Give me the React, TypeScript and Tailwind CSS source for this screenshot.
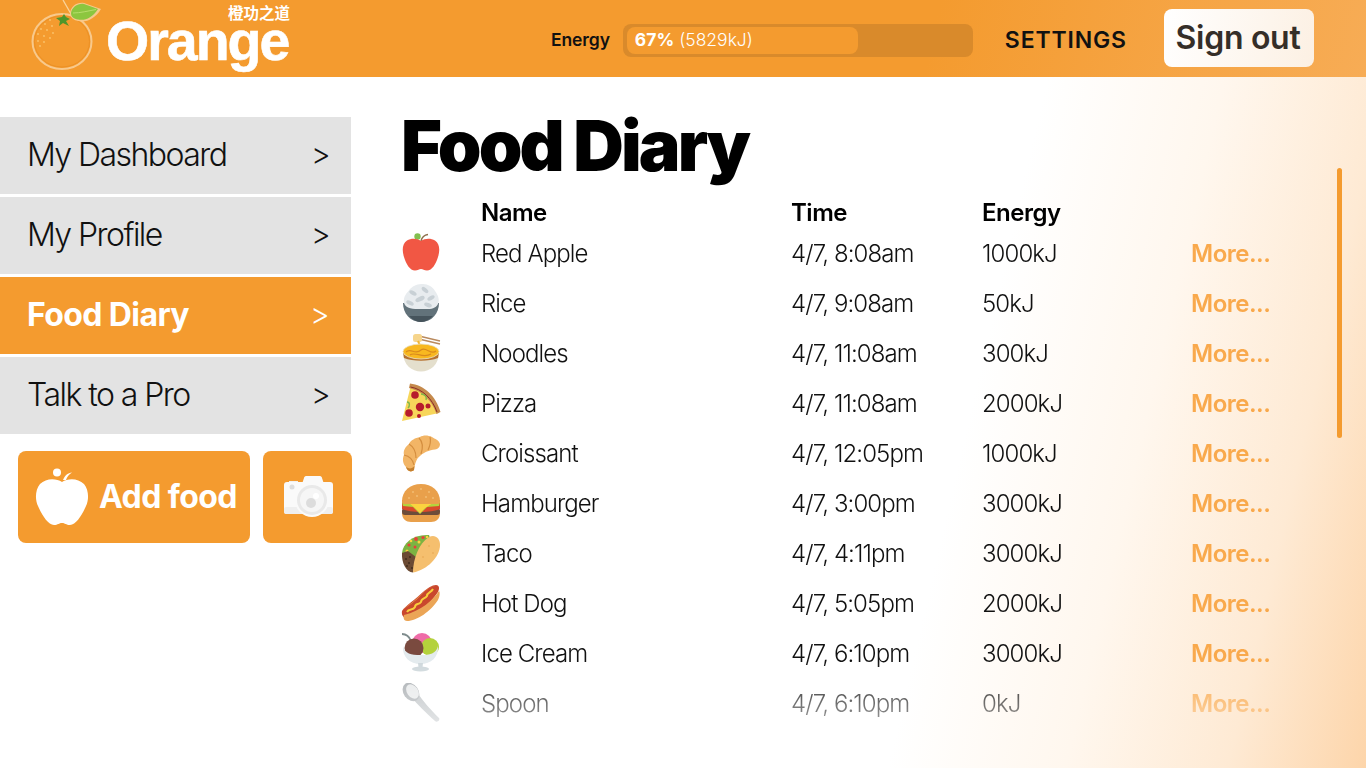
import React from "react";

const inter = { fontFamily: "Inter, 'Noto Sans', sans-serif" };

const Apple = () => (
  <svg viewBox="0 0 40 40" className="w-10 h-10">
    <path d="M20 8 C21 4 23 2 27 1.500" stroke="#8d6e4a" strokeWidth="1.500" fill="none" />
    <circle cx="16.500" cy="3.500" r="3.200" fill="#83BF4F" />
    <path d="M20 8 C24 5 30 5 34 7.500 C39 11 39 18 37 24 C35 31 31 37.500 26 37.500 C23 37.500 22 36 20 36 C18 36 17 37.500 14 37.500 C9 37.500 5 31 3 24 C1 18 1 11 6 7.500 C10 5 16 5 20 8Z" fill="#F15744" />
  </svg>
);
const Rice = () => (
  <svg viewBox="0 0 40 40" className="w-10 h-10">
    <path d="M2 20 C2 30 9 39 20 39 C31 39 38 30 38 20Z" fill="#62727A" />
    <path d="M8 33 C12 37 16 39 20 39 C24 39 28 37 32 33Z" fill="#46545C" />
    <path d="M3 20 C2 13 6 10 9 6 C13 2 17 1 22 1 C27 1 32 4 34 8 C37 12 39 17 37 21 C34 27 27 26 20 26 C12 26 5 26 3 20Z" fill="#E8ECEF" />
    <g fill="#C8D0D5">
      <ellipse cx="12" cy="10" rx="4" ry="2" transform="rotate(30 12 10)" />
      <ellipse cx="24" cy="7" rx="4" ry="2" transform="rotate(40 24 7)" />
      <ellipse cx="30" cy="15" rx="4" ry="2" transform="rotate(-30 30 15)" />
      <ellipse cx="19" cy="16" rx="5" ry="2.300" transform="rotate(-25 19 16)" />
      <ellipse cx="9" cy="20" rx="4" ry="2" transform="rotate(25 9 20)" />
      <ellipse cx="27" cy="22" rx="4" ry="2" transform="rotate(20 27 22)" />
    </g>
  </svg>
);
const Noodles = () => (
  <svg viewBox="0 0 40 40" className="w-10 h-10">
    <path d="M20 3.500 L39 8 M20 6.500 L39 11" stroke="#B98A5E" strokeWidth="1.300" />
    <rect x="12" y="1" width="9" height="8" rx="2.500" fill="#F6D58C" />
    <path d="M17 8 L20 15" stroke="#F2B632" strokeWidth="2" />
    <path d="M2 19 C2 32 11 38.500 20 38.500 C29 38.500 38 32 38 19Z" fill="#E4DFCD" />
    <path d="M2 19 L38 19 L37 25 C28 28.500 12 28.500 3 25Z" fill="#B5712E" />
    <ellipse cx="20" cy="18.500" rx="18" ry="7.500" fill="#F8B820" />
    <ellipse cx="20" cy="18.500" rx="18" ry="7.500" fill="none" stroke="#E9E2C9" strokeWidth=".8" />
    <path d="M5 19 C10 14 14 23 20 17 C25 13 30 23 35 18 M9 22 C14 18 22 26 30 21" stroke="#D98A1D" strokeWidth="1.200" fill="none" />
  </svg>
);
const Pizza = () => (
  <svg viewBox="0 0 40 40" className="w-10 h-10">
    <path d="M1 38 L10 2 C22 4 33 14 38 30Z" fill="#F7D65A" />
    <path d="M9 0.500 C23 2 35 13 39.500 29 L35.500 31 C31 17 21 8 8 5Z" fill="#C58A4C" />
    <path d="M9.500 4 C21 6 31 15 36 29" stroke="#8C2B26" strokeWidth="1" fill="none" />
    <g fill="#B71C2C">
      <circle cx="14" cy="12" r="3.800" />
      <circle cx="27" cy="23" r="2.500" />
      <circle cx="8" cy="30" r="3.800" />
      <circle cx="19" cy="24" r="4.200" />
      <circle cx="18" cy="33" r="2" />
    </g>
    <path d="M6 19 C9 19 9 23 7 25 M20 11 C24 11 26 14 25 17" stroke="#82B84A" strokeWidth="1.400" fill="none" />
  </svg>
);
const Croissant = () => (
  <svg viewBox="0 0 40 40" className="w-10 h-10">
    <path d="M39 11 C38 7 34 6 31 4 C27 2 22 2 19 4 C14 5 10 7 8 11 C4 14 2 18 3 22 C1 26 2 31 5 34 C6 38 10 40 13 37 C14 31 15 26 19 23 C24 18 31 17 36 16 C38 15 39 13 39 11Z" fill="#F2B566" />
    <path d="M29 4 C30 8 29 13 27 17 M18 5 C22 9 22 15 20 21 M8 11 C13 14 15 19 15 25 M3 22 C8 23 12 27 13 32" stroke="#D48E3F" strokeWidth="1.200" fill="none" />
    <path d="M5 34 C6 38 10 40 13 37 L13.500 33 C11 36 8 36 5 34Z" fill="#C47F2E" />
  </svg>
);
const Burger = () => (
  <svg viewBox="0 0 40 40" className="w-10 h-10">
    <path d="M1 30 C1 36 5 39 10 39 L30 39 C35 39 39 36 39 30Z" fill="#E9A04B" />
    <rect x="1" y="25" width="38" height="7" rx="3" fill="#6D4C3A" />
    <path d="M1 17 L39 17 L39 26 C30 30 10 30 1 26Z" fill="#D94A2B" />
    <path d="M1 19 L39 19 L38 23 L26 24 L19 31 L12 24 L2 23Z" fill="#B4D23C" />
    <path d="M8 20 L32 20 L24 25 L19 30 L14 25Z" fill="#FBD33F" />
    <path d="M1 18 C1 8 9 1 20 1 C31 1 39 8 39 18 C39 21 37 21 35 21 L5 21 C3 21 1 21 1 18Z" fill="#E9A04B" />
    <g fill="#F7CF8E">
      <circle cx="12" cy="9" r=".8" /><circle cx="20" cy="6" r=".8" /><circle cx="28" cy="9" r=".8" />
      <circle cx="16" cy="13" r=".8" /><circle cx="25" cy="14" r=".8" /><circle cx="8" cy="15" r=".8" /><circle cx="32" cy="15" r=".8" />
    </g>
  </svg>
);
const Taco = () => (
  <svg viewBox="0 0 40 40" className="w-10 h-10">
    <path d="M1 20 C2 10 12 1 28 2 L30 8 L14 26 L4 27Z" fill="#7CB342" />
    <g fill="#E8403A"><circle cx="15" cy="6" r="1.900" /><circle cx="22" cy="4.500" r="1.600" /><circle cx="8" cy="12" r="1.600" /><circle cx="14" cy="14" r="1.500" /></g>
    <g fill="#FBD33F"><circle cx="18" cy="9" r="1.500" /><circle cx="10" cy="8" r="1.300" /><circle cx="6" cy="18" r="1.500" /><circle cx="26" cy="4" r="1.200" /></g>
    <path d="M1 20 C0.500 30 5 39 12 39.500 L15 24 L7 18Z" fill="#6B4A33" />
    <g fill="#3E2A1C"><circle cx="5" cy="26" r=".9" /><circle cx="8" cy="30" r=".9" /><circle cx="6" cy="33" r=".9" /><circle cx="9" cy="24" r=".9" /><circle cx="11" cy="35" r=".9" /></g>
    <path d="M12 39.500 C12 26 18 10 28 4 C34 1 39 5 39 12 C39 24 26 37 12 39.500Z" fill="#F5BF6E" />
    <g fill="#E49F4A"><circle cx="28" cy="13" r=".7" /><circle cx="22" cy="24" r=".7" /><circle cx="32" cy="20" r=".7" /></g>
  </svg>
);
const HotDog = () => (
  <svg viewBox="0 0 40 40" className="w-10 h-10">
    <path d="M1 28 C5 22 14 17 22 9 C27 5 31 2 35 2 C38 2 39 5 37 9 C32 17 22 27 9 35 C4 37 0 33 1 28Z" fill="#C9472D" />
    <path d="M6 38 C16 38 30 28 37 17 C39 13 39 9 38 8 C32 17 20 28 3 32 C2 35 3 38 6 38Z" fill="#EBA556" />
    <path d="M1 27 C8 22 15 18 20 12 C25 7 30 3 34 3 C26 4 20 12 13 18 C9 21 5 24 1 27Z" fill="#EBA556" />
    <path d="M6 29 C8 25 12 28 14 24 C14 20 18 22 20 19 C20 15 24 16 26 13 C26 9 30 10 32 6" stroke="#F7CE3C" strokeWidth="2" fill="none" />
  </svg>
);
const IceCream = () => (
  <svg viewBox="0 0 40 40" className="w-10 h-10">
    <path d="M1 1 C5 1 8 3 10 8" stroke="#7F8C8D" strokeWidth="2" fill="none" />
    <circle cx="21" cy="10" r="10" fill="#EF6CA8" />
    <circle cx="29" cy="14" r="9" fill="#B4D23C" />
    <circle cx="13" cy="15" r="9.500" fill="#7A4A3F" />
    <path d="M2 13 C4 21 10 22 19.500 22 C29 22 35 21 37 13 C38 24 30 31 19.500 31 C9 31 1 24 2 13Z" fill="#E4EBEE" />
    <path d="M17 30 L22 30 L21.500 34.500 L17.500 34.500Z" fill="#CFD8DC" />
    <ellipse cx="19.500" cy="36" rx="8.500" ry="2.500" fill="#CFD8DC" />
  </svg>
);
const Spoon = () => (
  <svg viewBox="0 0 40 40" className="w-10 h-10">
    <path d="M12 16 C15 20 25 30 34 38 C36 40 39.500 37 38 35 C30 27 21 17 18 12Z" fill="#B9BEC1" />
    <ellipse cx="10" cy="9" rx="7.500" ry="10" transform="rotate(-35 10 9)" fill="#A4A9AD" />
    <ellipse cx="11.500" cy="8.500" rx="5.500" ry="8" transform="rotate(-35 11.500 8.500)" fill="#E6E8E9" />
  </svg>
);

const rows: [React.ReactNode, string, string, string][] = [
  [<Apple />, "Red Apple", "4/7, 8:08am", "1000kJ"],
  [<Rice />, "Rice", "4/7, 9:08am", "50kJ"],
  [<Noodles />, "Noodles", "4/7, 11:08am", "300kJ"],
  [<Pizza />, "Pizza", "4/7, 11:08am", "2000kJ"],
  [<Croissant />, "Croissant", "4/7, 12:05pm", "1000kJ"],
  [<Burger />, "Hamburger", "4/7, 3:00pm", "3000kJ"],
  [<Taco />, "Taco", "4/7, 4:11pm", "3000kJ"],
  [<HotDog />, "Hot Dog", "4/7, 5:05pm", "2000kJ"],
  [<IceCream />, "Ice Cream", "4/7, 6:10pm", "3000kJ"],
  [<Spoon />, "Spoon", "4/7, 6:10pm", "0kJ"],
];

const Logo = () => (
  <div className="relative w-[300px] h-[77px] shrink-0 overflow-hidden">
    <svg viewBox="0 0 110 77" className="absolute left-0 top-0 w-[110px] h-[77px]">
      <path d="M63 0 L71 14" stroke="#F9D39B" strokeWidth="1.300" fill="none" />
      <ellipse cx="62" cy="41.500" rx="29.500" ry="27.500" fill="#F49B2F" stroke="#F8C98C" strokeWidth="2" />
      <ellipse cx="62" cy="41.500" rx="27.500" ry="25.500" fill="none" stroke="#EC9024" strokeWidth="1" />
      <path d="M70 13 C71 6 77 2 84 3 L101 9 C95 19 86 23 78 21 C73 20 70 17 70 13Z" fill="#F8C98C" />
      <path d="M71 13 C72 7 78 3 84 4 L98 9 C92 18 85 21 78 19.500 C74 19 71 17 71 13Z" fill="#8CC63F" />
      <path d="M73 13 C80 13 88 11 96 9.500" stroke="#B7DD6B" strokeWidth="1" fill="none" />
      <path d="M56 18 L62 17 L64 14 L66 17 L70 19 L66 21 L69 26 L63 23 L59 26 L60 21Z" fill="#4F962A" />
      <g fill="#F9C46E">
        <circle cx="50" cy="20" r=".9" /><circle cx="45" cy="24" r=".9" /><circle cx="52" cy="26" r=".9" /><circle cx="41" cy="29" r=".9" />
        <circle cx="47" cy="30" r=".9" /><circle cx="53" cy="33" r=".9" /><circle cx="38" cy="34" r=".9" /><circle cx="44" cy="36" r=".9" />
        <circle cx="50" cy="38" r=".9" /><circle cx="38" cy="41" r=".9" /><circle cx="44" cy="42" r=".9" /><circle cx="40" cy="46" r=".9" />
      </g>
    </svg>
    <span className="absolute left-[106px] top-[16px] text-white text-[55.500px] leading-[50px] font-bold tracking-[-2px] [-webkit-text-stroke:0.6px_white]" style={{ fontFamily: "'Liberation Sans', sans-serif" }}>
      Orange
    </span>
    <span className="absolute left-[228px] top-[4px] text-white text-[15.500px] leading-[16px] font-bold" style={{ fontFamily: "'Noto Sans CJK SC', sans-serif" }}>
      橙功之道
    </span>
  </div>
);

const NavItem = ({ label, active }: { label: string; active?: boolean }) => (
  <div className={`h-[77px] flex items-center justify-between pl-[27px] pr-[22px] pb-[2px] text-[32px] ${active ? "bg-[#F49B2F] text-white font-bold tracking-[-0.6px]" : "bg-[#E3E3E3] text-[#111] font-light tracking-[-1.550px]"}`}>
    <span>{label}</span>
    <span className="text-[30px] font-light">&gt;</span>
  </div>
);

export default function App() {
  return (
    <div className="w-[1366px] h-[768px] overflow-hidden flex flex-col bg-[linear-gradient(103deg,#ffffff_69%,#FFF7EE_80.500%,#FEEAD4_91%,#FDD5AA_100%)]" style={inter}>
      <header className="h-[77px] shrink-0 flex items-center bg-[linear-gradient(103deg,#F49B2F_0%,#F49B2F_68%,#F7AC55_100%)] pr-[52px]">
        <Logo />
        <div className="ml-[251px] mt-[4px] flex items-center">
          <span className="text-[17.500px] font-semibold tracking-[-0.1px] text-[#111] mr-[13px]">Energy</span>
          <div className="w-[350px] h-[33px] rounded-[8px] bg-[#D98A2B] py-[3px] pl-[4px]">
            <div className="w-[231px] h-[27px] rounded-[8px] bg-[#F49B2F] flex items-center pl-[8px] text-white text-[17.500px] font-light">
              <span className="font-bold mr-[5px]">67%</span>(5829kJ)
            </div>
          </div>
        </div>
        <span className="ml-[32px] mt-[4px] text-[23px] font-semibold tracking-[0.85px] text-[#111]">SETTINGS</span>
        <button className="ml-auto mb-[1px] pb-[1px] pr-[2px] w-[150px] h-[58px] rounded-[8px] bg-[linear-gradient(103deg,#ffffff,#FCF0E3)] text-[#352e28] text-[32px] font-semibold tracking-[-0.3px]">
          Sign out
        </button>
      </header>
      <div className="flex-1 flex min-h-0">
        <aside className="w-[351px] shrink-0 pt-[40px]">
          <div className="flex flex-col gap-[3px]">
            <NavItem label="My Dashboard" />
            <NavItem label="My Profile" />
            <NavItem label="Food Diary" active />
            <NavItem label="Talk to a Pro" />
          </div>
          <div className="flex mt-[17px] ml-[18px] w-[334px] justify-between">
            <button className="w-[232px] h-[92px] rounded-[8px] bg-[#F49B2F] flex items-center pl-[16px] gap-[9px] text-white text-[32px] font-bold tracking-[-0.6px]">
              <svg viewBox="0 0 56 58" className="w-[56px] h-[58px]">
                <circle cx="23" cy="4.500" r="4" fill="#fff" />
                <path d="M29 12 C31 7 34 5 38 4.500 C35 6 33 9 32 12Z" fill="#fff" />
                <path d="M28 14 C34 10 44 10 50 16 C55 22 55 32 52 38 C48 47 42 57 36 57 C32 57 31 55 28 55 C25 55 24 57 20 57 C14 57 8 47 4 38 C1 32 1 22 6 16 C12 10 22 10 28 14Z" fill="#fff" />
              </svg>
              <span>Add food</span>
            </button>
            <button className="w-[89px] h-[92px] rounded-[8px] bg-[#F49B2F] flex items-center justify-center pl-[3px]">
              <svg viewBox="0 0 50 42" className="w-[50px] h-[42px]">
                <path d="M5 5 H14 V8 H5Z" fill="#F0F0F0" />
                <path d="M18 8 L20 2 C20 1 21 0 22 0 H36 C37 0 38 1 38 2 L40 8Z" fill="#FAFAFA" />
                <rect x="0" y="6" width="49" height="32" rx="3" fill="#FAFAFA" />
                <rect x="0" y="31" width="49" height="7" rx="2" fill="#EFEFEF" />
                <circle cx="8" cy="11" r="2.500" fill="#DDD" />
                <circle cx="28" cy="24" r="17" fill="#FAFAFA" />
                <circle cx="28" cy="24" r="15" fill="#E9E9E9" />
                <circle cx="28" cy="24" r="12" fill="#F6F6F6" />
                <circle cx="27" cy="27" r="5" fill="#DCDCDC" />
                <circle cx="32" cy="20" r="3" fill="#FFF" />
              </svg>
            </button>
          </div>
        </aside>
        <main className="relative flex-1 pl-[50px]">
          <h1 className="mt-[30px] text-[70px] leading-[78px] font-black tracking-[-2.800px] text-black">Food Diary</h1>
          <div className="mt-[13px] h-[532px] overflow-hidden text-[24px] [mask-image:linear-gradient(to_bottom,black_87%,rgba(0,0,0,.6)_95%,rgba(0,0,0,.35)_100%)]">
            <div className="grid grid-cols-[80px_310px_191px_209px_100px] h-[31px] leading-[30px] items-start font-semibold text-black tracking-[-0.5px]">
              <div />
              <div>Name</div>
              <div>Time</div>
              <div>Energy</div>
              <div />
            </div>
            <div className="grid grid-cols-[80px_310px_191px_209px_100px] auto-rows-[50px] items-center text-[#111] font-light tracking-[-0.9px]">
              {rows.map(([icon, name, time, energy]) => (
                <React.Fragment key={name}>
                  <div className="-mt-[3px]">{icon}</div>
                  <div>{name}</div>
                  <div>{time}</div>
                  <div>{energy}</div>
                  <div className="font-semibold text-[#F9A94C] tracking-[-0.5px]">More...</div>
                </React.Fragment>
              ))}
            </div>
          </div>
          <div className="absolute left-[986px] top-[91px] w-[5px] h-[270px] rounded-full bg-[#F49B2F]" />
        </main>
      </div>
    </div>
  );
}
